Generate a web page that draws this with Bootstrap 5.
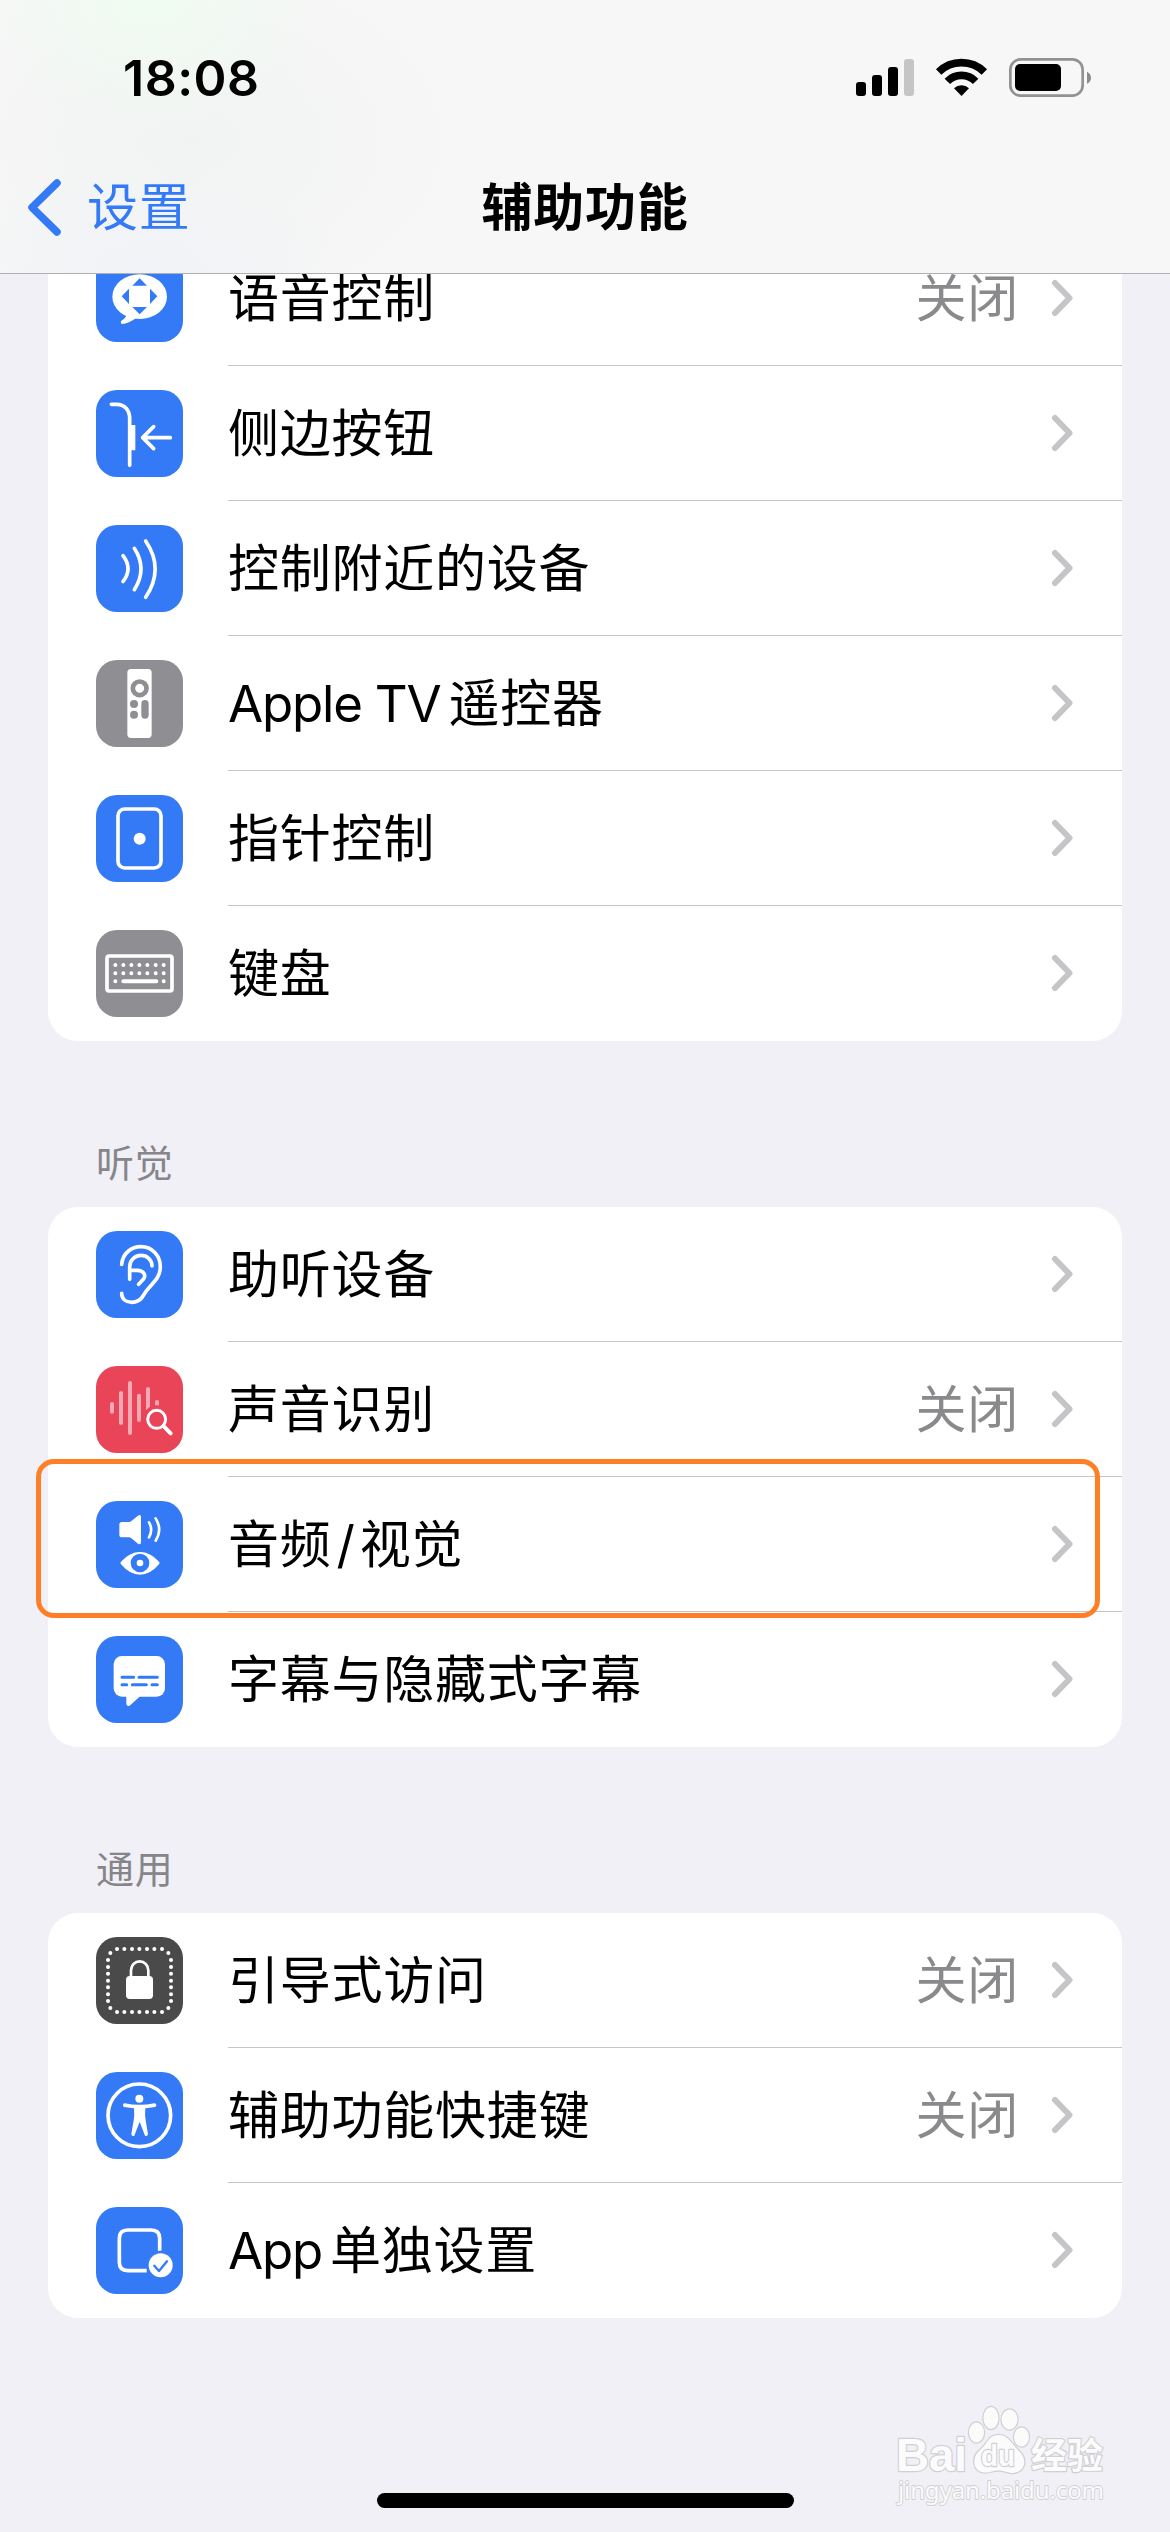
<!DOCTYPE html>
<html lang="zh-CN">
<head>
<meta charset="utf-8">
<meta name="viewport" content="width=device-width, initial-scale=1">
<title>辅助功能</title>
<link href="https://cdn.jsdelivr.net/npm/bootstrap@5.3.0/dist/css/bootstrap.min.css" rel="stylesheet">
<style>
:root{--ios-blue:#3479f6;--ios-grey:#8e8e93}
body{margin:0;background:#f1f0f6;font-family:Inter,"Noto Sans CJK SC",sans-serif;font-size:51px;line-height:1.2;color:#000}
.screen{width:1170px;height:2532px;background:#f1f0f6}
.topbar{height:274px;z-index:5;border-bottom:1px solid #b0b0b2;background:
 radial-gradient(ellipse 170px 130px at 150px 0,#effcf1 0,rgba(239,252,241,0) 100%),
 radial-gradient(ellipse 190px 110px at 150px 273px,#f0f2f7 0,rgba(240,242,247,0) 100%),
 radial-gradient(ellipse 280px 190px at 190px 140px,#f1f3f2 0,rgba(241,243,242,0) 100%),#f7f7f7}
.statusbar{height:141px}
.clock{font-size:50px;font-weight:600;line-height:60px;padding-left:123px;padding-top:48px;letter-spacing:.5px}
.status-icons{width:300px;height:80px;margin-top:40px;margin-right:50px}
.navrow{height:134px}
.back{color:var(--ios-blue);padding-left:27px;gap:26px}
.back svg{width:34px;height:60px}
.page-title{font-weight:600}
.cjk{letter-spacing:.75px}
.latin{letter-spacing:-1.2px;margin-right:8px}
.slash{margin:0 4px 0 5px}
.content{margin-top:-43px}
.panel{margin:0 48px;background:#fff;border-radius:30px}
.caption-row{color:#85858a;font-size:38px;line-height:60px;height:166px;padding:92px 96px 0}
.item{height:135px;padding-left:48px;gap:45px}
.tile{width:87px;height:87px;border-radius:21px;background:var(--ios-blue);flex:none}
.tile.grey{background:var(--ios-grey)}.tile.red{background:#ea4459}.tile.dark{background:#4a4a4a}
.tile svg{width:87px;height:87px;display:block;fill:none;stroke:#fff;stroke-width:11;stroke-linecap:round;stroke-linejoin:round}
.tile .f{fill:#fff;stroke:none}.tile .b{fill:var(--ios-blue);stroke:none}.tile .g{fill:var(--ios-grey);stroke:none}
.item-body{border-bottom:1px solid #c5c5c8;padding-right:49px}
.item-body>span{padding-top:2px}
.item:last-child .item-body{border-bottom-color:transparent}
.state{color:#8a8a8d;margin-right:32px}
.chev{width:22px;height:38px;fill:none;stroke:#c5c5c7;stroke-width:6;stroke-linecap:round;stroke-linejoin:round}
.marker{left:-12px;top:-18px;width:1064px;height:159px;border:5px solid #ff7f27;border-radius:18px;z-index:3}
.home-bar{left:377px;bottom:24px;width:417px;height:15px;border-radius:8px;background:#000}
.watermark{left:880px;top:2390px;width:250px;height:130px}
</style>
<script src="https://cdn.jsdelivr.net/npm/bootstrap@5.3.0/dist/js/bootstrap.bundle.min.js"></script>
</head>
<body>
<svg width="0" height="0" class="position-absolute"><symbol id="chev" viewBox="0 0 22 38"><path d="M4 4 L18.500 19 L4 34"/></symbol></svg>
<div class="screen position-relative overflow-hidden">
<header class="topbar position-relative">
 <div class="statusbar d-flex justify-content-between">
  <div class="clock">18:08</div>
  <svg class="status-icons" viewBox="0 0 900 240">
   <rect x="108" y="126" width="30" height="42" rx="9"/><rect x="156" y="105" width="30" height="63" rx="9"/><rect x="204" y="81" width="30" height="87" rx="9"/><rect x="252" y="57" width="30" height="111" rx="9" fill="#c5c5c5"/>
   <path d="M356 96A98 98 0 0 1 493 96M382 124A60 60 0 0 1 467 124" fill="none" stroke="#000" stroke-width="23"/><path d="M424.500 168L402 145A32 32 0 0 1 447 145Z"/>
   <rect x="571" y="58" width="217" height="109" rx="31" fill="none" stroke="#929292" stroke-width="8"/><rect x="585" y="72" width="138" height="81" rx="15"/><path d="M801 95Q813 101 813 113T801 131Z" fill="#8c8c8c"/>
  </svg>
 </div>
 <nav class="navrow d-flex align-items-center position-relative">
  <a class="back d-flex align-items-center text-decoration-none cjk" href="#"><svg viewBox="0 0 34 60" fill="none" stroke="#3479f6" stroke-width="7.500" stroke-linecap="round" stroke-linejoin="round"><path d="M30 5L5 29.500L30 54"/></svg><span>设置</span></a>
  <div class="page-title cjk position-absolute start-50 translate-middle-x">辅助功能</div>
 </nav>
</header>
<main class="content">
 <section class="panel">
  <div class="item d-flex align-items-center"><div class="tile"><svg viewBox="0 0 261 261"><ellipse class="f" cx="131" cy="125" rx="82" ry="67"/><path class="f" d="M91 178Q91 190 76 197Q72 204 78 207Q98 205 122 188Z"/><path class="b" d="M131 70L153 92H109ZM131 178L153 156H109ZM77 124L99 101V147ZM184 124L162 101V147Z"/></svg></div><div class="item-body d-flex align-items-center flex-grow-1 h-100"><span class="cjk me-auto">语音控制</span><span class="state cjk">关闭</span><svg class="chev"><use href="#chev"/></svg></div></div>
  <div class="item d-flex align-items-center"><div class="tile"><svg viewBox="0 0 261 261"><path d="M46 43H62C86 43 101 61 101 85V226M140 143H223M173 110L140 143L173 176"/><rect class="f" x="103" y="105" width="15" height="76" rx="2"/></svg></div><div class="item-body d-flex align-items-center flex-grow-1 h-100"><span class="cjk me-auto">侧边按钮</span><svg class="chev"><use href="#chev"/></svg></div></div>
  <div class="item d-flex align-items-center"><div class="tile"><svg viewBox="0 0 261 261"><path d="M81 92Q111 131 81 170M115 70Q155 132 115 194M149 48Q206 132 149 217"/></svg></div><div class="item-body d-flex align-items-center flex-grow-1 h-100"><span class="cjk me-auto">控制附近的设备</span><svg class="chev"><use href="#chev"/></svg></div></div>
  <div class="item d-flex align-items-center"><div class="tile grey"><svg viewBox="0 0 261 261"><rect class="f" x="94" y="27" width="73" height="207" rx="11"/><circle cx="131" cy="85" r="20.500" style="stroke:#8e8e93;stroke-width:14"/><circle class="g" cx="114" cy="132" r="12"/><circle class="g" cx="114" cy="164" r="12"/><rect class="g" x="136" y="120" width="22" height="56" rx="11"/></svg></div><div class="item-body d-flex align-items-center flex-grow-1 h-100"><span class="cjk me-auto"><span class="latin">Apple TV</span>遥控器</span><svg class="chev"><use href="#chev"/></svg></div></div>
  <div class="item d-flex align-items-center"><div class="tile"><svg viewBox="0 0 261 261"><rect x="66" y="42" width="129" height="177" rx="20"/><circle class="f" cx="131" cy="131" r="18"/></svg></div><div class="item-body d-flex align-items-center flex-grow-1 h-100"><span class="cjk me-auto">指针控制</span><svg class="chev"><use href="#chev"/></svg></div></div>
  <div class="item d-flex align-items-center"><div class="tile grey"><svg viewBox="0 0 261 261"><rect x="33" y="78" width="195" height="105" rx="6"/><path d="M58 105h.1M82 105h.1M106 105h.1M130 105h.1M154 105h.1M179 105h.1M203 105h.1M58 130h.1M82 130h.1M106 130h.1M130 130h.1M154 130h.1M179 130h.1M203 130h.1M58 154h.1M82 154H181M203 154h.1" style="stroke-width:12"/></svg></div><div class="item-body d-flex align-items-center flex-grow-1 h-100"><span class="cjk me-auto">键盘</span><svg class="chev"><use href="#chev"/></svg></div></div>
 </section>
 <div class="caption-row cjk">听觉</div>
 <section class="panel">
  <div class="item d-flex align-items-center"><div class="tile"><svg viewBox="0 0 261 261"><path d="M77 100C80 66 107 47 135 47C168 47 193 74 193 107C193 148 160 160 143 192C134 208 124 214 107 214C90 214 77 204 77 187M168 105C168 86 153 73 135 73C116 73 101 88 101 108V145M101 118H124C142 118 152 132 142 145L128 160"/></svg></div><div class="item-body d-flex align-items-center flex-grow-1 h-100"><span class="cjk me-auto">助听设备</span><svg class="chev"><use href="#chev"/></svg></div></div>
  <div class="item d-flex align-items-center"><div class="tile red"><svg viewBox="0 0 261 261"><path d="M48 114V137M75 81V171M102 51V201M129 89V162M156 69V130M183 108V117" style="stroke:#f6a9b4;stroke-width:12"/><circle cx="182" cy="160" r="32" style="fill:#ea4459;stroke:#ea4459;stroke-width:20"/><circle cx="182" cy="160" r="27" style="stroke-width:9"/><path d="M204 182L224 202" style="stroke-width:12"/></svg></div><div class="item-body d-flex align-items-center flex-grow-1 h-100"><span class="cjk me-auto">声音识别</span><span class="state cjk">关闭</span><svg class="chev"><use href="#chev"/></svg></div></div>
  <div class="item d-flex align-items-center position-relative"><div class="tile"><svg viewBox="0 0 261 261"><path class="f" d="M78 63Q70 63 70 71V101Q70 109 78 109H99Q103 109 106 112L126 128Q135 133 135 123V49Q135 39 126 44L106 60Q103 63 99 63Z"/><path d="M159 64Q172 86 159 109M179 52Q200 86 179 119" style="stroke-width:8"/><path class="f" d="M75 182Q101 153 132 153T189 182Q193 186 189 190Q163 221 132 221T75 190Q71 186 75 182Z"/><circle class="b" cx="132" cy="186" r="28"/><circle class="f" cx="132" cy="186" r="10"/></svg></div><div class="item-body d-flex align-items-center flex-grow-1 h-100"><span class="cjk me-auto">音频<span class="slash">/</span>视觉</span><svg class="chev"><use href="#chev"/></svg></div><div class="marker position-absolute"></div></div>
  <div class="item d-flex align-items-center"><div class="tile"><svg viewBox="0 0 261 261"><rect class="f" x="53" y="60" width="154" height="122" rx="25"/><path class="f" d="M91 178V204Q93 213 101 209L133 180Z"/><path d="M78 124H113M129 124H184M78 146H92M109 146H151M168 146H184" style="stroke:#3479f6;stroke-width:9"/></svg></div><div class="item-body d-flex align-items-center flex-grow-1 h-100"><span class="cjk me-auto">字幕与隐藏式字幕</span><svg class="chev"><use href="#chev"/></svg></div></div>
 </section>
 <div class="caption-row cjk">通用</div>
 <section class="panel">
  <div class="item d-flex align-items-center"><div class="tile dark"><svg viewBox="0 0 261 261"><path style="stroke-width:12" d="M63 36h.1M85 36h.1M108 36h.1M130 36h.1M153 36h.1M175 36h.1M198 36h.1M63 225h.1M85 225h.1M108 225h.1M130 225h.1M153 225h.1M175 225h.1M198 225h.1M36 69h.1M36 90h.1M36 110h.1M36 131h.1M36 151h.1M36 172h.1M36 192h.1M225 69h.1M225 90h.1M225 110h.1M225 131h.1M225 151h.1M225 172h.1M225 192h.1M43 48h.1M217 48h.1M43 213h.1M217 213h.1"/><rect class="f" x="90" y="117" width="81" height="69" rx="11"/><path d="M105 119V100A26 27 0 0 1 157 100V119" style="stroke-width:8"/></svg></div><div class="item-body d-flex align-items-center flex-grow-1 h-100"><span class="cjk me-auto">引导式访问</span><span class="state cjk">关闭</span><svg class="chev"><use href="#chev"/></svg></div></div>
  <div class="item d-flex align-items-center"><div class="tile"><svg viewBox="0 0 261 261"><circle cx="130" cy="130" r="94"/><circle class="f" cx="130" cy="80" r="12"/><path class="f" d="M86 94Q130 103 175 94Q181 95 181 99T177 105L148 109Q146 130 149 145L156 187Q154 194 147 191L131 149L115 191Q108 195 106 187L113 145Q116 130 114 109L84 105Q81 103 81 99T86 94Z"/></svg></div><div class="item-body d-flex align-items-center flex-grow-1 h-100"><span class="cjk me-auto">辅助功能快捷键</span><span class="state cjk">关闭</span><svg class="chev"><use href="#chev"/></svg></div></div>
  <div class="item d-flex align-items-center"><div class="tile"><svg viewBox="0 0 261 261"><path d="M191 131V94Q191 69 166 69H95Q70 69 70 94V166Q70 191 95 191H152" style="stroke-linecap:butt"/><circle class="f" cx="194" cy="175" r="36"/><path d="M175 176L189 192L213 163" style="stroke:#3479f6;stroke-width:7"/></svg></div><div class="item-body d-flex align-items-center flex-grow-1 h-100"><span class="cjk me-auto"><span class="latin">App</span>单独设置</span><svg class="chev"><use href="#chev"/></svg></div></div>
 </section>
</main>
<svg class="watermark position-absolute" viewBox="0 0 250 130" fill="#fbfbfc" stroke="#d0d0d4" stroke-width="2.400" paint-order="stroke" stroke-linejoin="round">
 <text x="16" y="81" font-family="Liberation Sans" font-weight="700" font-size="46" textLength="71" lengthAdjust="spacingAndGlyphs">Bai</text>
 <ellipse cx="96.500" cy="42.500" rx="7.500" ry="10"/><ellipse cx="111" cy="28" rx="7.500" ry="11"/><ellipse cx="129.500" cy="29.500" rx="8" ry="10"/><ellipse cx="141.500" cy="47" rx="7.500" ry="9.500"/>
 <path d="M118.500 45C108 45 108 54 99 61C92 67 92 82 105 82.500C112 82.500 112 80.500 118.500 80.500C125 80.500 127 83 133 83C146 82 147 69 140 62C131 54 129 45 118.500 45Z"/>
 <text x="101" y="76" font-family="Liberation Sans" font-weight="700" font-size="29" textLength="34" lengthAdjust="spacingAndGlyphs">du</text>
 <text x="151" y="79" font-family="Noto Sans CJK SC" font-weight="700" font-size="36" textLength="72">经验</text>
 <text x="18" y="109" font-family="Noto Sans" font-size="24" stroke-width="1.800" textLength="206">jingyan.baidu.com</text>
</svg>
<div class="home-bar position-absolute"></div>
</div>
</body>
</html>
